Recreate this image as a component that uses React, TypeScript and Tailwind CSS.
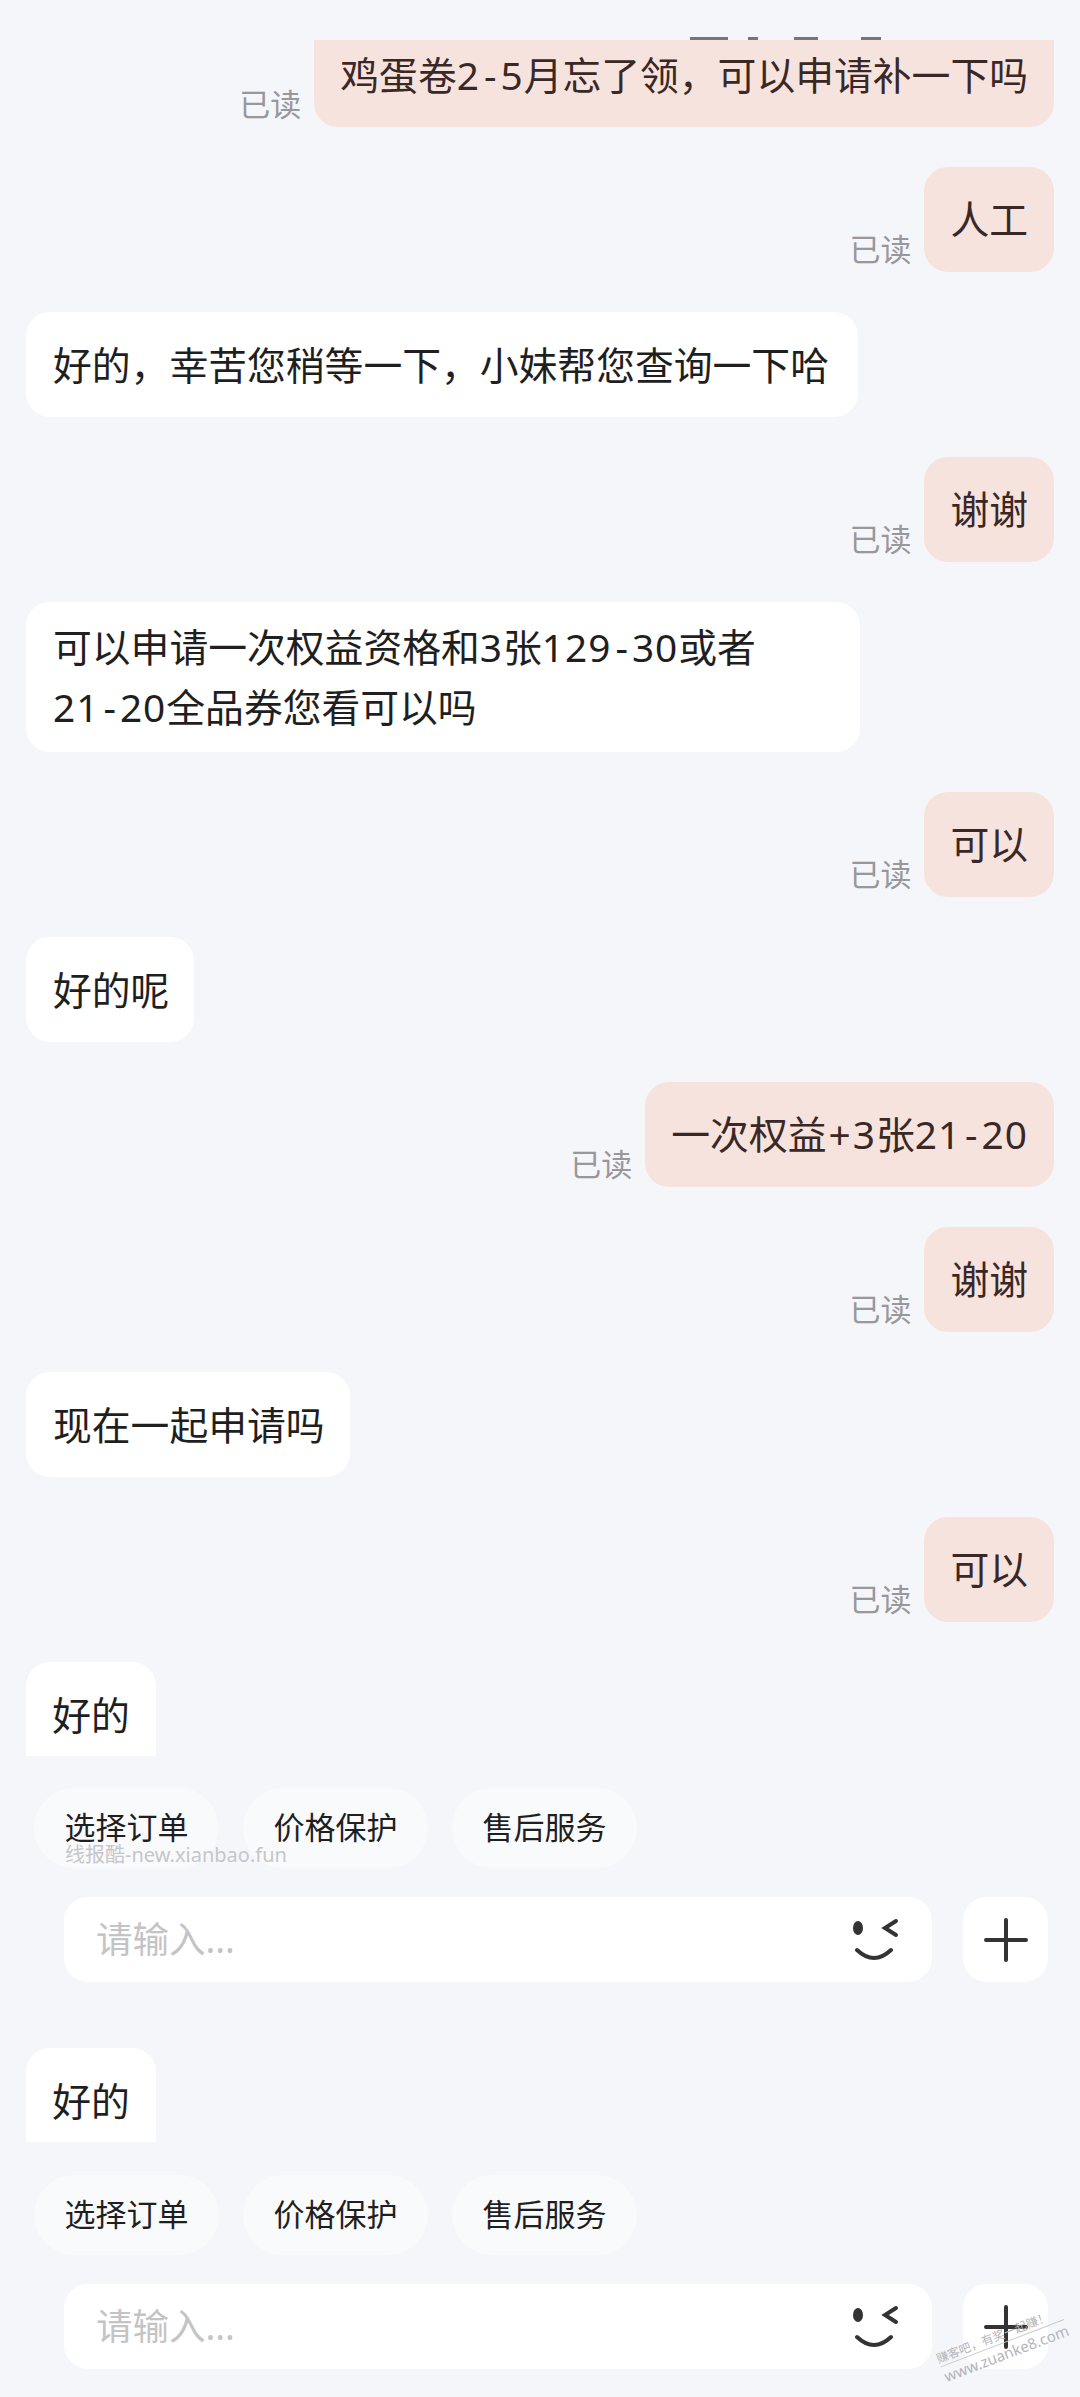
const FONT = "font-['Noto_Sans','Noto_Sans_CJK_SC',sans-serif]";

function T({ s }: { s: string }) {
  const parts = s.split(/(\d+|-|\+)/).filter(Boolean);
  return (
    <>
      {parts.map((p, i) => {
        if (p === "-") {
          return (
            <span key={i} className="mx-[4px]">
              -
            </span>
          );
        }
        if (p === "+") {
          return (
            <span key={i} className="mx-[2px]">
              +
            </span>
          );
        }
        if (/^\d/.test(p)) {
          return (
            <span key={i} className="tracking-[1px]">
              {p}
            </span>
          );
        }
        return <span key={i}>{p}</span>;
      })}
    </>
  );
}

function Mine({ text, clipped }: { text: string; clipped?: boolean }) {
  return (
    <div className="flex items-end justify-end gap-[13px]">
      <span className="pb-[3px] text-[31px] leading-[40px] text-[#97979c]">已读</span>
      <div
        className={`flex items-center bg-[#f6e3de] px-[26px] text-[38.8px] text-[#3a2826] ${
          clipped ? "h-[87px] rounded-b-[24px] pb-[17px]" : "h-[105px] rounded-[24px]"
        }`}
      >
        <span>
          <T s={text} />
        </span>
      </div>
    </div>
  );
}

function Theirs({ children, width }: { children: React.ReactNode; width?: string }) {
  return (
    <div className="flex justify-start">
      <div
        className={`flex min-h-[105px] items-center rounded-[24px] bg-white py-[15px] pl-[27px] pr-[25px] text-[38.8px] leading-[60px] text-[#1f1f1f] ${
          width ?? ""
        }`}
      >
        <div>{children}</div>
      </div>
    </div>
  );
}

function Chip({ text }: { text: string }) {
  return (
    <div className="flex h-[80px] w-[185px] items-center justify-center rounded-[40px] bg-[#f9fafc] pb-[2px] text-[31px] text-[#1f1f1f]">
      {text}
    </div>
  );
}

function Composer() {
  return (
    <div>
      <div className="flex gap-[24px] pl-[8px]">
        <Chip text="选择订单" />
        <Chip text="价格保护" />
        <Chip text="售后服务" />
      </div>
      <div className="mt-[29px] flex gap-[31px] pl-[38px] pr-[6px]">
        <div className="flex h-[85px] flex-1 items-center justify-between rounded-[24px] bg-white pl-[32px] pr-[33px]">
          <span className="text-[36.5px] text-[#c4c4c6]">请输入...</span>
          <svg width="48" height="48" viewBox="0 0 48 48" fill="none" stroke="#333" strokeLinecap="round" strokeWidth="4">
            <ellipse cx="7" cy="12" rx="5" ry="7" fill="#333" stroke="none" />
            <path d="M45 5 L34 12 L45 19" />
            <path d="M6 34 Q23 50 40 34" />
          </svg>
        </div>
        <div className="flex h-[85px] w-[85px] items-center justify-center rounded-[24px] bg-white">
          <svg width="44" height="44" viewBox="0 0 44 44" stroke="#333" strokeLinecap="round" strokeWidth="4">
            <path d="M2 22 H42 M22 2 V42" />
          </svg>
        </div>
      </div>
    </div>
  );
}

function ClippedHello() {
  return (
    <div className="flex h-[94px] w-[130px] items-start justify-center rounded-t-[24px] bg-white pt-[23px] text-[38.8px] leading-[60px] text-[#1f1f1f]">
      好的
    </div>
  );
}

export default function App() {
  return (
    <div className={`relative h-[2397px] w-[1080px] overflow-hidden bg-[#f5f6fa] ${FONT}`}>
      <div className="px-[26px] pt-[37px]">
        <div className="flex h-[3px] gap-[20px] pl-[664px]">
          <div className="w-[38px] bg-[#77757a]" />
          <div className="w-[10px] bg-[#77757a]" />
          <div className="ml-[16px] w-[24px] bg-[#77757a]" />
          <div className="ml-[23px] w-[20px] bg-[#77757a]" />
        </div>
        <div className="flex flex-col gap-[40px]">
          <Mine text="鸡蛋卷2-5月忘了领，可以申请补一下吗" clipped />
          <Mine text="人工" />
          <Theirs width="w-[832px]">好的，幸苦您稍等一下，小妹帮您查询一下哈</Theirs>
          <Mine text="谢谢" />
          <Theirs width="w-[834px]">
            <T s="可以申请一次权益资格和3张129-30或者" />
            <br />
            <T s="21-20全品券您看可以吗" />
          </Theirs>
          <Mine text="可以" />
          <Theirs>好的呢</Theirs>
          <Mine text="一次权益+3张21-20" />
          <Mine text="谢谢" />
          <Theirs>现在一起申请吗</Theirs>
          <Mine text="可以" />
          <ClippedHello />
        </div>
        <div className="mt-[32px]">
          <Composer />
        </div>
        <div className="mt-[66px]">
          <ClippedHello />
        </div>
        <div className="mt-[33px]">
          <Composer />
        </div>
      </div>
      <span className="absolute left-[65px] top-[1843px] text-[20px] leading-[24px] text-[#c6c6ca]">线报酷-new.xianbao.fun</span>
      <div className="absolute left-[933px] top-[2330px] -rotate-[21deg] text-[12px] leading-[16px] text-[#b5b5bb]">
        赚客吧，有奖一起赚！
      </div>
      <div className="absolute left-[940px] top-[2342px] -rotate-[21deg] border-t border-[#c9c9cd] text-[15px] leading-[20px] text-[#b5b5bb]">
        www.zuanke8.com
      </div>
    </div>
  );
}
